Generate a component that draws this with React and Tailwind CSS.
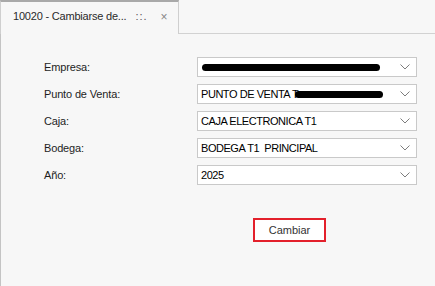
const rows = [
  { label: "Empresa:", value: null, redact: "w-[178px] ml-[1px]" },
  { label: "Punto de Venta:", value: "PUNTO DE VENTA T", redact: "w-[88px] -ml-[3px]" },
  { label: "Caja:", value: "CAJA ELECTRONICA T1" },
  { label: "Bodega:", value: "BODEGA T1  PRINCIPAL" },
  { label: "Año:", value: "2025" },
];

const Chevron = () => (
  <svg width="10" height="6" viewBox="0 0 10 6" className="shrink-0">
    <path d="M0.5 0.5 L5 5 L9.5 0.5" fill="none" stroke="#7d7d7d" strokeWidth="1" />
  </svg>
);

export default function App() {
  return (
    <div
      className="w-[435px] h-[286px] bg-[#f7f7f7] overflow-hidden flex flex-col text-[11px] text-[#1e1e1e]"
      style={{ fontFamily: '"Liberation Sans", Arial, sans-serif' }}
    >
      {/* Tab strip */}
      <div className="flex h-[34px] shrink-0">
        <div className="w-[179px] border-t-2 border-t-[#a9a9a9] border-l border-r border-[#cfcfcf] bg-[#f7f7f7] flex items-center pl-[12px] pb-[3px]">
          <span className="tracking-[-0.2px] text-[#2a2a2a]">10020 - Cambiarse de...</span>
          <span className="ml-[9px] text-[#555] tracking-[1px]">::.</span>
          <span className="ml-[13px] text-[#888] text-[12px]">×</span>
        </div>
        <div className="flex-1 border-b border-[#d2d2d2]" />
      </div>

      {/* Body */}
      <div className="flex-1 border-l border-[#c4c4c4] pt-[23px]">
        <div className="flex flex-col gap-[7px]">
          {rows.map((row, i) => (
            <div key={i} className="flex items-center h-[20px]">
              <div className="w-[196px] pl-[43px] tracking-[-0.15px]">{row.label}</div>
              <div className="w-[220px] h-[20px] bg-white border border-[#c9c9c9] flex items-center pl-[3px] pr-[6px]">
                <div className="flex-1 flex items-center text-black tracking-[-0.45px] whitespace-pre">
                  {row.value && <span>{row.value}</span>}
                  {row.redact && (
                    <span className={`h-[7px] rounded-full bg-black inline-block ${row.redact}`} />
                  )}
                </div>
                <Chevron />
              </div>
            </div>
          ))}
        </div>

        <div className="mt-[33px] pl-[252px]">
          <button className="w-[73px] h-[24px] bg-white border-2 border-[#e3202b] text-[#333] text-[11px] flex items-center justify-center">
            Cambiar
          </button>
        </div>
      </div>
    </div>
  );
}
